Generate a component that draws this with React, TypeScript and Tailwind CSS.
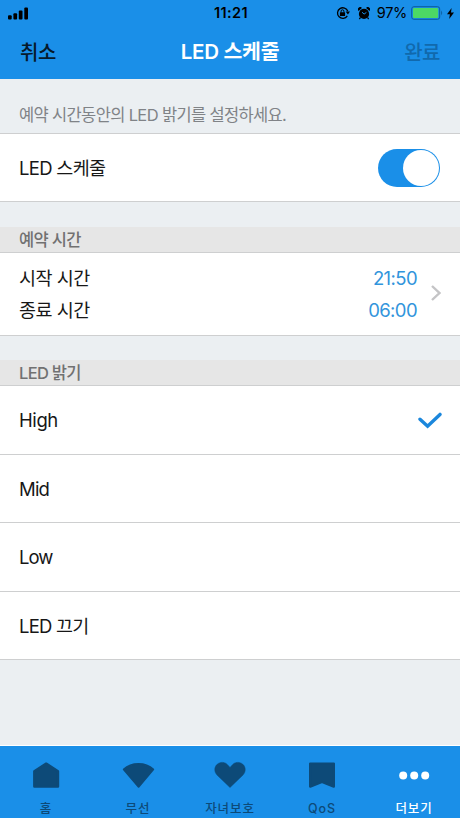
const levels = [
  { label: 'High', selected: true, box: 'h-[69px]', tracking: 'tracking-[-0.4px]' },
  { label: 'Mid', selected: false, box: 'h-[68px]', tracking: 'tracking-[-0.8px]' },
  { label: 'Low', selected: false, box: 'h-[69px]', tracking: 'tracking-[-1px]' },
  { label: 'LED 끄기', selected: false, box: 'h-[68px]', tracking: 'tracking-[-0.8px]' },
]

const tabs = [
  { label: '홈', icon: 'home', active: false },
  { label: '무선', icon: 'wifi', active: false },
  { label: '자녀보호', icon: 'heart', active: false },
  { label: 'QoS', icon: 'flag', active: false },
  { label: '더보기', icon: 'more', active: true },
]

function TabIcon({ name }: { name: string }) {
  return (
    <svg width="34" height="28" viewBox="0 0 34 28" fill="currentColor" stroke="currentColor" strokeLinejoin="round">
      {name === 'home' && <path d="M17.2 2.6 29 10.2V25.6H5.3V10.2Z" strokeWidth="2.4" />}
      {name === 'wifi' && <path d="M2.7 8.5C10.5 1 24.5 1 32.3 8.5L17.6 25.9Z" strokeWidth="1.8" />}
      {name === 'heart' && (
        <path
          d="M17 26.5 4.2 14.2C1 11 1 6 4.2 3.3 7.3.5 12 .9 14.5 3.7L17 6.4l2.5-2.7C22 .9 26.7.5 29.8 3.3 33 6 33 11 29.8 14.2Z"
          strokeWidth="0.5"
        />
      )}
      {name === 'flag' && <path d="M5.2 2.6H28.8V25.6L17 21 5.2 25.6Z" strokeWidth="2.4" />}
      {name === 'more' && (
        <g stroke="none">
          <circle cx="6.2" cy="14.4" r="4" />
          <circle cx="17.2" cy="14.4" r="4" />
          <circle cx="28.2" cy="14.4" r="4" />
        </g>
      )}
    </svg>
  )
}

function StatusBar() {
  return (
    <div className="h-[26px] grid grid-cols-[1fr_auto_1fr] items-center pl-[8px] pr-[6px] text-black">
      <svg width="21" height="13" viewBox="0 0 21 13" className="mt-px">
        <rect x="0" y="8.3" width="3.7" height="4.2" rx="1" />
        <rect x="5.4" y="6.2" width="3.7" height="6.3" rx="1" />
        <rect x="10.8" y="3.4" width="3.7" height="9.1" rx="1" />
        <rect x="16.3" y="0.4" width="3.7" height="12.1" rx="1" />
      </svg>
      <span className="mt-px text-[14.5px] font-semibold leading-none tracking-[0.4px]">11:21</span>
      <div className="flex items-center justify-end">
        <svg width="14" height="14" viewBox="0 0 14 14" fill="none" stroke="black">
          <path d="M11.3 9.9A5.3 5.3 0 1 1 11.8 5.2" strokeWidth="1.3" />
          <path d="M9.6 5.5h4.4L11.9 8.5Z" fill="black" stroke="none" />
          <rect x="3.9" y="6.2" width="5.2" height="3.9" rx="0.5" fill="black" stroke="none" />
          <path d="M5.1 6.5V5.2a1.4 1.4 0 0 1 2.8 0v1.3" strokeWidth="1" />
        </svg>
        <svg width="12" height="13" viewBox="0 0 12 13" className="ml-[8px]">
          <circle cx="6" cy="6.9" r="5.1" />
          <path d="M.4 3.9A2.3 2.3 0 0 1 3.9.9ZM11.6 3.9A2.3 2.3 0 0 0 8.1.9Z" />
          <path d="M2.4 10.5l-1 1.6M9.6 10.5l1 1.6" stroke="black" strokeWidth="1.3" />
          <path d="M4 5.2 6.1 7.1 8.4 5.4" fill="none" stroke="#1a8fe8" strokeWidth="1" />
        </svg>
        <span className="ml-[7px] mt-px text-[14.5px] leading-none tracking-[-0.3px]">97%</span>
        <svg width="33" height="14" viewBox="0 0 33 14" className="ml-[4px]">
          <rect x="0.7" y="0.7" width="28" height="12.6" rx="2.2" fill="none" stroke="#0c5c9c" strokeWidth="1" />
          <rect x="2" y="2" width="25.2" height="10" rx="1" fill="#4cd964" />
          <path d="M30.2 4.6q2 2.4 0 4.8Z" fill="#0c5c9c" />
        </svg>
        <svg width="7" height="11" viewBox="0 0 7 11" className="ml-[3px]">
          <path d="M4.6 0 0 6.2h2.9L2.2 11 7 4.5H4Z" />
        </svg>
      </div>
    </div>
  )
}

function SectionTitle({ children }: { children: string }) {
  return (
    <div className="h-[26px] border-b border-[#cecfd0] bg-[#e6e6e6] px-[19px] text-[16.5px] font-medium leading-[27px] tracking-[-0.7px] text-[#717171]">
      {children}
    </div>
  )
}

export default function App() {
  return (
    <div className="flex h-[818px] w-[460px] flex-col overflow-hidden bg-[#ebeff2] font-[Inter,'Noto_Sans_CJK_KR',sans-serif] text-[#171717]">
      <header className="h-[79px] bg-[#1a8fe8]">
        <StatusBar />
        <div className="grid h-[53px] grid-cols-3 items-center px-[20px] text-[20px]">
          <span className="font-medium tracking-[-0.5px] text-[#06192b]">취소</span>
          <h1 className="text-center text-[20.5px] font-semibold tracking-[-0.3px] whitespace-nowrap text-white">LED 스케줄</h1>
          <span className="text-right font-medium tracking-[-0.5px] text-[#1169ad]">완료</span>
        </div>
      </header>

      <p className="h-[55px] border-b border-[#cecfd0] px-[19px] pt-[24px] text-[16.5px] leading-[24px] tracking-[-0.65px] whitespace-nowrap text-[#808387]">
        예약 시간동안의 LED 밝기를 설정하세요.
      </p>

      <div className="flex h-[68px] items-center justify-between border-b border-[#cecfd0] bg-white pr-[20px] pl-[19px]">
        <span className="pt-[2px] text-[18.5px] tracking-[-0.7px]">LED 스케줄</span>
        <div className="flex h-[38px] w-[62px] items-center justify-end rounded-full bg-[#1a8fe8] pr-px">
          <div className="size-[36px] rounded-full bg-white" />
        </div>
      </div>

      <div className="mt-[25px]">
        <SectionTitle>예약 시간</SectionTitle>
        <div className="flex h-[83px] items-center border-b border-[#cecfd0] bg-white pr-[19px] pl-[19px]">
          <div className="flex-1 text-[18.5px] leading-[32px] tracking-[-0.5px]">
            <div>시작 시간</div>
            <div>종료 시간</div>
          </div>
          <div className="pb-px text-right text-[18.5px] leading-[32px] tracking-[-0.6px] text-[#3295dc]">
            <div>21:50</div>
            <div>06:00</div>
          </div>
          <svg width="10" height="16" viewBox="0 0 10 16" className="mb-[2px] ml-[14px]" fill="none" stroke="#c4c4c6" strokeWidth="2.4">
            <path d="M1 1 8.4 8 1 15" />
          </svg>
        </div>
      </div>

      <div className="mt-[24px]">
        <SectionTitle>LED 밝기</SectionTitle>
        {levels.map((level) => (
          <div key={level.label} className={`flex items-center justify-between border-b border-[#cecfd0] bg-white pr-[18px] pl-[19px] ${level.box}`}>
            <span className={`pt-[2px] text-[18.5px] ${level.tracking}`}>{level.label}</span>
            {level.selected && (
              <svg width="24" height="17" viewBox="0 0 24 17" fill="none" stroke="#1b87dc" strokeWidth="3.4" strokeLinecap="round">
                <path d="M2 7.2 9.6 14.2 22 2.4" />
              </svg>
            )}
          </div>
        ))}
      </div>

      <nav className="mt-auto grid h-[73px] grid-cols-5 border-t border-white bg-[#1a8fe8]">
        {tabs.map((tab) => (
          <div key={tab.label} className={`flex flex-col items-center pt-[15px] ${tab.active ? 'text-white' : 'text-[#0d4a78]'}`}>
            <TabIcon name={tab.icon} />
            <span className="mt-[9px] text-[12.5px] font-medium leading-[21px] tracking-[0.9px]">{tab.label}</span>
          </div>
        ))}
      </nav>
    </div>
  )
}
